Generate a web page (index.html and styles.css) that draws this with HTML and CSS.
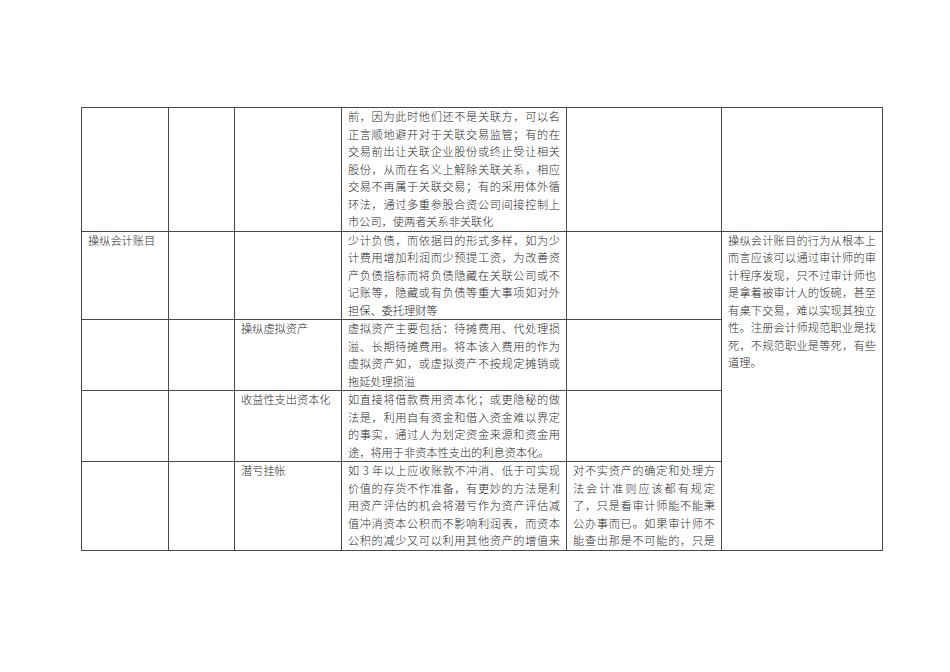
FILE: index.html
```html
<!DOCTYPE html>
<html lang="zh-CN">
<head>
<meta charset="utf-8">
<title>操纵会计账目</title>
<link rel="stylesheet" href="styles.css">
</head>
<body>
<table class="sheet">
  <colgroup>
    <col class="c1"><col class="c2"><col class="c3"><col class="c4"><col class="c5"><col class="c6">
  </colgroup>
  <tbody>
    <tr>
      <td></td>
      <td></td>
      <td></td>
      <td>
        <span class="ln">前，因为此时他们还不是关联方，可以名</span>
        <span class="ln">正言顺地避开对于关联交易监管；有的在</span>
        <span class="ln">交易前出让关联企业股份或终止受让相关</span>
        <span class="ln">股份，从而在名义上解除关联关系，相应</span>
        <span class="ln">交易不再属于关联交易；有的采用体外循</span>
        <span class="ln">环法，通过多重参股合资公司间接控制上</span>
        <span class="ln end">市公司，使两者关系非关联化</span>
      </td>
      <td></td>
      <td></td>
    </tr>
    <tr>
      <td>操纵会计账目</td>
      <td></td>
      <td></td>
      <td>
        <span class="ln">少计负债，而依据目的形式多样，如为少</span>
        <span class="ln">计费用增加利润而少预提工资，为改善资</span>
        <span class="ln">产负债指标而将负债隐藏在关联公司或不</span>
        <span class="ln">记账等，隐藏或有负债等重大事项如对外</span>
        <span class="ln end">担保、委托理财等</span>
      </td>
      <td></td>
      <td rowspan="4">
        <span class="ln">操纵会计账目的行为从根本上</span>
        <span class="ln">而言应该可以通过审计师的审</span>
        <span class="ln">计程序发现，只不过审计师也</span>
        <span class="ln">是拿着被审计人的饭碗，甚至</span>
        <span class="ln">有桌下交易，难以实现其独立</span>
        <span class="ln">性。注册会计师规范职业是找</span>
        <span class="ln">死，不规范职业是等死，有些</span>
        <span class="ln end">道理。</span>
      </td>
    </tr>
    <tr>
      <td></td>
      <td></td>
      <td>操纵虚拟资产</td>
      <td>
        <span class="ln">虚拟资产主要包括：待摊费用、代处理损</span>
        <span class="ln">溢、长期待摊费用。将本该入费用的作为</span>
        <span class="ln">虚拟资产如，或虚拟资产不按规定摊销或</span>
        <span class="ln end">拖延处理损溢</span>
      </td>
      <td></td>
    </tr>
    <tr>
      <td></td>
      <td></td>
      <td>收益性支出资本化</td>
      <td>
        <span class="ln">如直接将借款费用资本化；或更隐秘的做</span>
        <span class="ln">法是，利用自有资金和借入资金难以界定</span>
        <span class="ln">的事实，通过人为划定资金来源和资金用</span>
        <span class="ln end">途，将用于非资本性支出的利息资本化。</span>
      </td>
      <td></td>
    </tr>
    <tr>
      <td></td>
      <td></td>
      <td>潜亏挂帐</td>
      <td>
        <span class="ln">如 3 年以上应收账款不冲消、低于可实现</span>
        <span class="ln">价值的存货不作准备，有更妙的方法是利</span>
        <span class="ln">用资产评估的机会将潜亏作为资产评估减</span>
        <span class="ln">值冲消资本公积而不影响利润表，而资本</span>
        <span class="ln">公积的减少又可以利用其他资产的增值来</span>
      </td>
      <td>
        <span class="ln">对不实资产的确定和处理方</span>
        <span class="ln">法会计准则应该都有规定</span>
        <span class="ln">了，只是看审计师能不能秉</span>
        <span class="ln">公办事而已。如果审计师不</span>
        <span class="ln">能查出那是不可能的，只是</span>
      </td>
    </tr>
  </tbody>
</table>
</body>
</html>
```
FILE: styles.css
```css
html, body {
  margin: 0;
  padding: 0;
  background: #ffffff;
}

body {
  font-family: "Noto Sans CJK SC", "Noto Sans CJK JP", sans-serif;
  font-weight: 300;
  font-size: 11.2px;
  line-height: 17.5px;
  color: #2a2a2a;
}

.sheet {
  border-collapse: collapse;
  table-layout: fixed;
  width: 801px;
  margin: 107px 0 0 81px;
}

.c1 { width: 87px; }
.c2 { width: 66px; }
.c3 { width: 107px; }
.c4 { width: 225px; }
.c5 { width: 155px; }
.c6 { width: 161px; }

.sheet td {
  border: 1px solid #4a4a4a;
  padding: 0 6px;
  vertical-align: top;
  white-space: nowrap;
}

.ln {
  display: block;
  text-align: justify;
  text-align-last: justify;
  text-justify: inter-character;
}

.ln.end {
  text-align: left;
  text-align-last: left;
}
```
